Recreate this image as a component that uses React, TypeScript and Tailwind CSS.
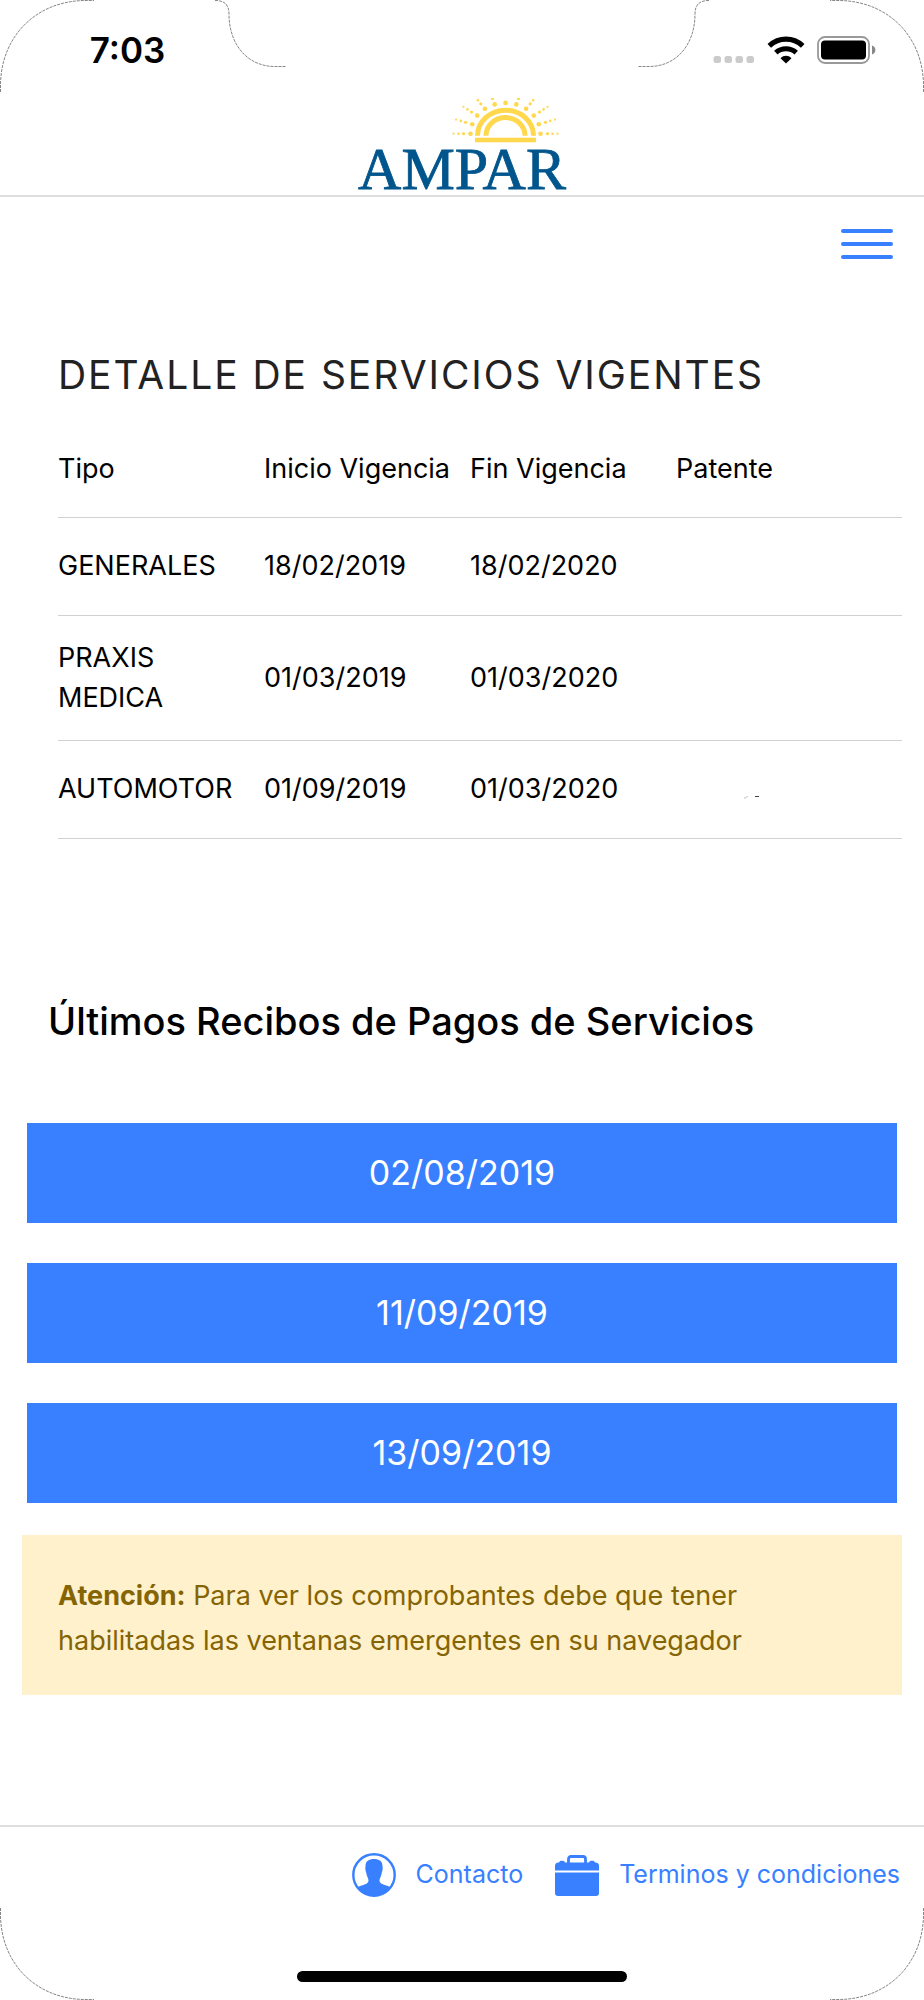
import type { ReactNode } from "react";

type Servicio = { tipo: string; inicio: string; fin: string; patente?: ReactNode };

const PatenteMarks = () => (
  <svg width="18" height="4" viewBox="0 0 18 4" className="ml-[66px] mt-4" aria-hidden="true">
    <path d="M2 3c2 0 3-1 4-2" stroke="#bbb" fill="none" />
    <path d="M13 1.500h4" stroke="#444" fill="none" />
  </svg>
);

const servicios: Servicio[] = [
  { tipo: "GENERALES", inicio: "18/02/2019", fin: "18/02/2020" },
  { tipo: "PRAXIS MEDICA", inicio: "01/03/2019", fin: "01/03/2020" },
  { tipo: "AUTOMOTOR", inicio: "01/09/2019", fin: "01/03/2020", patente: <PatenteMarks /> },
];

const recibos = ["02/08/2019", "11/09/2019", "13/09/2019"];

const Corner = ({ className }: { className: string }) => (
  <svg width="110" height="110" viewBox="0 0 110 110" fill="none" className={`pointer-events-none absolute ${className}`} aria-hidden="true">
    <path d="M0.500 92V84C1.500 36 36 1.500 84 0.500H94" stroke="#777" strokeWidth="0.900" strokeDasharray="3 1" />
  </svg>
);

const NotchEdge = ({ className }: { className: string }) => (
  <svg width="72" height="70" viewBox="0 0 72 70" fill="none" className={className} aria-hidden="true">
    <path d="M0 0.500C9 0.500 14 4 14 14C14 44 32 66.500 60 66.500H71" stroke="#777" strokeWidth="0.900" strokeDasharray="3 1" />
  </svg>
);

const StatusIcons = () => (
  <div className="flex items-center gap-3">
    <svg width="42" height="28" viewBox="0 0 42 28" fill="#cbcbcb" aria-hidden="true">
      {[0, 11, 22, 33].map((x) => (
        <rect key={x} x={x + 0.5} y="20" width="7.500" height="7" rx="2.500" />
      ))}
    </svg>
    <svg width="38" height="28" viewBox="0 0 38 28" fill="none" stroke="#000" aria-label="Wi-Fi">
      <path d="M2.300 9.800C12 0.900 26 0.900 35.700 9.800" strokeWidth="5.200" />
      <path d="M8.800 16.600C14.500 11.300 23.500 11.300 29.200 16.600" strokeWidth="5" />
      <path d="M13.500 22.300C16.500 19 21.500 19 24.500 22.300L19 27.500Z" fill="#000" stroke="none" />
    </svg>
    <svg width="60" height="28" viewBox="0 0 60 28" aria-label="Batería">
      <rect x="1" y="1" width="51" height="26" rx="7" fill="none" stroke="#999" strokeWidth="1.800" />
      <rect x="4" y="4.500" width="45" height="19" rx="4" />
      <path d="M55 9.500C59.500 11 59.500 17 55 18.500Z" fill="#888" />
    </svg>
  </div>
);

const rayAngles = [0, 18, 36, 54, 72, 90, 108, 126, 144, 162, 180];
const rayDots = [
  { r: 35, size: 2.3 },
  { r: 42, size: 1.6 },
  { r: 47, size: 1.3 },
  { r: 52, size: 1.1 },
];

const Logo = () => (
  <svg width="220" height="108" viewBox="0 0 220 108" className="shrink-0" role="img" aria-label="AMPAR">
    <defs>
      <clipPath id="sky">
        <rect x="90" y="0" width="130" height="46" />
      </clipPath>
    </defs>
    <g fill="none" stroke="#ffd84d" strokeWidth="5">
      <path d="M125.500 37.700A28 25.500 0 0 1 181.500 37.700" />
      <path d="M134 37.700A19.500 18.200 0 0 1 173 37.700" />
    </g>
    <rect x="123" y="39.700" width="61" height="4.600" fill="#ffd84d" />
    <g fill="#ffd84d" clipPath="url(#sky)">
      {rayAngles.map((angle) =>
        rayDots.map(({ r, size }) => (
          <circle
            key={`${angle}-${r}`}
            cx={153.5 + r * Math.cos((angle * Math.PI) / 180)}
            cy={35.7 - r * 0.88 * Math.sin((angle * Math.PI) / 180)}
            r={size}
          />
        )),
      )}
    </g>
    <text x="110" y="91" textAnchor="middle" fontFamily="Liberation Serif, serif" fontSize="60" fill="#00558c" stroke="#00558c" strokeWidth="0.800">
      AMPAR
    </text>
  </svg>
);

const ContactIcon = () => (
  <svg width="44" height="44" viewBox="0 0 44 44" aria-hidden="true">
    <circle cx="22" cy="22" r="20.700" fill="none" stroke="currentColor" strokeWidth="2.400" />
    <path
      fill="currentColor"
      d="M22 6C27 6 30.500 8 30.500 13C31 15 30.500 18 29.800 19.500C29.500 23 27.500 25 27.500 27.500C27.500 31.500 33 31.500 38.500 34C34 40 28 42.500 22 42.500S10 40 5.500 34C11 31.500 16.500 31.500 16.500 27.500C16.500 25 14.500 23 14.200 19.500C13.500 18 13 15 13.500 13C13.500 8 17 6 22 6Z"
    />
  </svg>
);

const BriefcaseIcon = () => (
  <svg width="44" height="42" viewBox="0 0 44 42" aria-hidden="true">
    <path d="M13.500 9V5Q13.500 2.500 16 2.500H28Q30.500 2.500 30.500 5V9" fill="none" stroke="currentColor" strokeWidth="2.800" />
    <path fill="currentColor" d="M0 16.500V12Q0 8.500 3.500 8.500H4Q4.500 6.800 6 6.800H8Q9.500 6.800 10 8.500H34Q34.500 6.800 36 6.800H38Q39.500 6.800 40 8.500H40.500Q44 8.500 44 12V16.500Z" />
    <path fill="currentColor" d="M0 18.500H44V39Q44 42 41 42H3Q0 42 0 39Z" />
  </svg>
);

export default function App() {
  return (
    <div className="relative flex min-h-screen flex-col overflow-hidden bg-white font-['Inter',sans-serif] text-black">
      <Corner className="left-0 top-0" />
      <Corner className="right-0 top-0 -scale-x-100" />
      <Corner className="bottom-0 left-0 -scale-y-100" />
      <Corner className="bottom-0 right-0 -scale-100" />

      <header className="border-b-2 border-[#dedede]">
        <div className="grid h-[98px] grid-cols-[1fr_72px_350px_72px_1fr] items-start">
          <span className="pl-10 pt-8 text-center text-[35px] font-semibold leading-9">7:03</span>
          <NotchEdge className="" />
          <span />
          <NotchEdge className="-scale-x-100" />
          <div className="flex justify-center pr-11 pt-9">
            <StatusIcons />
          </div>
        </div>
        <div className="flex h-[97px] items-start justify-center">
          <Logo />
        </div>
      </header>

      <main className="flex flex-1 flex-col px-[22px]">
        <div className="flex h-24 justify-end pr-2 pt-[23px]">
          <button type="button" aria-label="Menú" className="flex h-12 w-[54px] flex-col items-center justify-center gap-[9px]">
            <span className="h-1 w-[52px] rounded-full bg-[#3880ff]" />
            <span className="h-1 w-[52px] rounded-full bg-[#3880ff]" />
            <span className="h-1 w-[52px] rounded-full bg-[#3880ff]" />
          </button>
        </div>

        <section className="pl-9 pt-14">
          <h1 className="text-[39px] leading-[52px] tracking-wider text-[#222]">DETALLE DE SERVICIOS VIGENTES</h1>
          <table className="mt-5 w-full table-fixed text-left text-[27px] leading-10">
            <colgroup>
              <col className="w-[206px]" />
              <col className="w-[206px]" />
              <col className="w-[206px]" />
              <col />
            </colgroup>
            <thead>
              <tr className="h-24 border-b border-[#d2d2d2]">
                {["Tipo", "Inicio Vigencia", "Fin Vigencia", "Patente"].map((titulo) => (
                  <th key={titulo} scope="col" className="whitespace-nowrap font-normal">
                    {titulo}
                  </th>
                ))}
              </tr>
            </thead>
            <tbody>
              {servicios.map(({ tipo, inicio, fin, patente }) => (
                <tr key={tipo} className="h-[98px] border-b border-[#d2d2d2]">
                  <td className="py-[22px] pr-6">{tipo}</td>
                  <td>{inicio}</td>
                  <td>{fin}</td>
                  <td>{patente}</td>
                </tr>
              ))}
            </tbody>
          </table>
        </section>

        <section className="pt-[156px]">
          <h2 className="pl-[26px] text-[38px] font-medium leading-[52px]">Últimos Recibos de Pagos de Servicios</h2>
          <div className="mt-[76px] flex flex-col gap-10 px-[5px]">
            {recibos.map((fecha) => (
              <button key={fecha} type="button" className="h-[100px] w-full bg-[#3880ff] text-[34px] text-white">
                {fecha}
              </button>
            ))}
          </div>
        </section>

        <p role="alert" className="mb-10 mt-8 bg-[#fff1cc] px-9 pb-8 pt-[38px] text-[27px] leading-[45px] text-[#856404]">
          <strong className="font-bold">Atención:</strong> Para ver los comprobantes debe que tener
          <br />
          habilitadas las ventanas emergentes en su navegador
        </p>
      </main>

      <footer className="flex h-[175px] flex-col items-center justify-between border-t-2 border-[#dedede] pb-[18px] pt-[26px]">
        <nav className="flex w-full justify-end gap-8 pr-6 text-[25px] text-[#3880ff]">
          <a href="#contacto" className="flex items-center gap-5">
            <ContactIcon />
            Contacto
          </a>
          <a href="#terminos" className="flex items-center gap-5">
            <BriefcaseIcon />
            Terminos y condiciones
          </a>
        </nav>
        <div className="h-[11px] w-[330px] rounded-full bg-black" />
      </footer>
    </div>
  );
}
